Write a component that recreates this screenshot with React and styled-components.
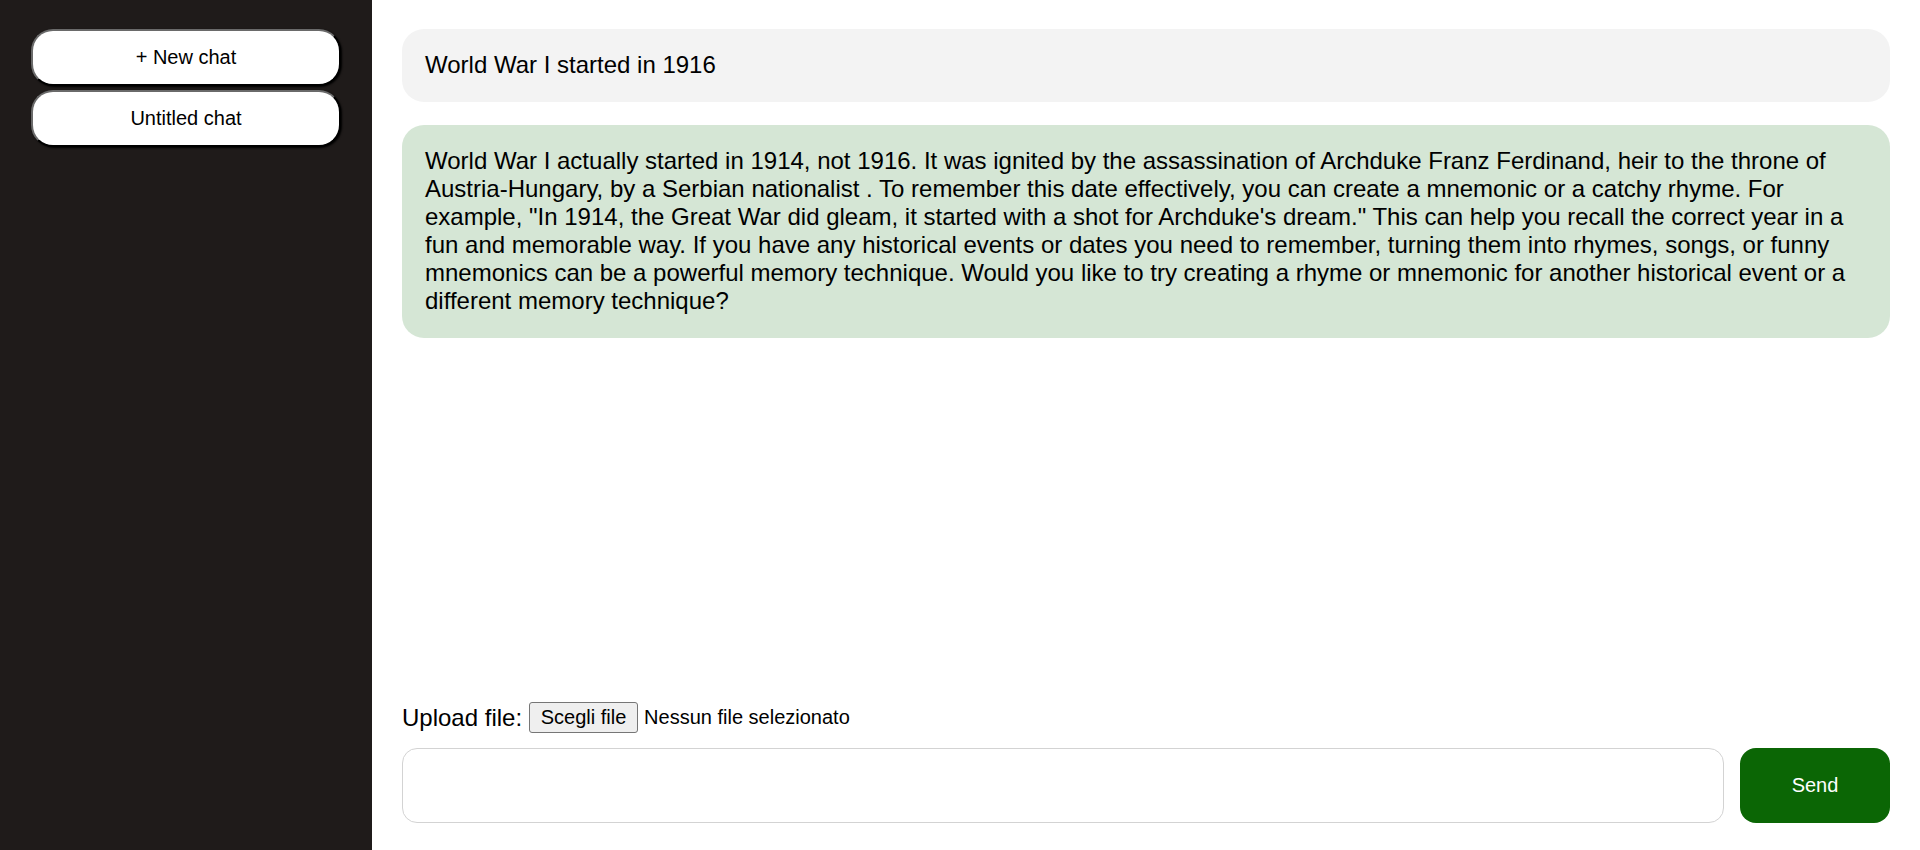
import React from "react";
import styled, { createGlobalStyle } from "styled-components";

const GlobalStyle = createGlobalStyle`
  html, body, #root { margin: 0; padding: 0; height: 100%; }
  body { font-family: "Liberation Sans", Arial, sans-serif; color: #000; background: #fff; }
  * { box-sizing: border-box; }
`;

const Layout = styled.div`
  display: flex;
  height: 850px;
  width: 1920px;
`;

const Sidebar = styled.aside`
  width: 372px;
  flex: none;
  background: #1f1b1a;
  padding: 29px 31px;
  display: flex;
  flex-direction: column;
  gap: 4px;
`;

const SideButton = styled.button`
  width: 100%;
  height: 57px;
  background: #fff;
  border: 2px solid;
  border-color: #6a6a6a #000 #000 #6a6a6a;
  border-radius: 22px;
  box-shadow: 1px 1px 2px #000;
  font-family: "Liberation Sans", Arial, sans-serif;
  font-size: 20px;
  color: #000;
  cursor: pointer;
`;

const Main = styled.main`
  flex: 1;
  display: flex;
  flex-direction: column;
  padding: 29px 30px 27px 30px;
  min-width: 0;
`;

const Messages = styled.div`
  flex: 1;
  display: flex;
  flex-direction: column;
  gap: 23px;
`;

const Bubble = styled.div`
  background: ${(p) => (p.$bot ? "#d5e6d5" : "#f3f3f3")};
  border-radius: 22px;
  padding: 22px 23px 23px;
  font-size: 24px;
  line-height: 28px;
`;

const UploadRow = styled.div`
  display: flex;
  align-items: center;
  height: 31px;
  margin-bottom: 15px;
`;

const UploadLabel = styled.span`
  font-size: 24px;
  margin-right: 7px;
`;

const FileButton = styled.label`
  display: inline-flex;
  align-items: center;
  justify-content: center;
  height: 31px;
  width: 109px;
  background: #efefef;
  border: 1px solid #767676;
  border-radius: 3px;
  font-size: 20px;
  margin-right: 6px;
  cursor: pointer;
`;

const HiddenFile = styled.input`
  display: none;
`;

const FileStatus = styled.span`
  font-size: 20px;
`;

const InputRow = styled.div`
  display: flex;
  gap: 16px;
  height: 75px;
`;

const TextBox = styled.textarea`
  flex: 1;
  border: 1px solid #d3d3d3;
  border-radius: 15px;
  resize: none;
  padding: 12px 16px;
  font-family: "Liberation Sans", Arial, sans-serif;
  font-size: 20px;
  outline: none;
`;

const SendButton = styled.button`
  width: 150px;
  flex: none;
  background: #0b6605;
  color: #fff;
  border: none;
  border-radius: 16px;
  font-family: "Liberation Sans", Arial, sans-serif;
  font-size: 20px;
  cursor: pointer;
`;

const messages = [
  { bot: false, text: "World War I started in 1916" },
  {
    bot: true,
    text:
      'World War I actually started in 1914, not 1916. It was ignited by the assassination of Archduke Franz Ferdinand, heir to the throne of Austria-Hungary, by a Serbian nationalist . To remember this date effectively, you can create a mnemonic or a catchy rhyme. For example, "In 1914, the Great War did gleam, it started with a shot for Archduke\'s dream." This can help you recall the correct year in a fun and memorable way. If you have any historical events or dates you need to remember, turning them into rhymes, songs, or funny mnemonics can be a powerful memory technique. Would you like to try creating a rhyme or mnemonic for another historical event or a different memory technique?',
  },
];

export default function App() {
  return (
    <>
      <GlobalStyle />
      <Layout>
        <Sidebar>
          <SideButton>+ New chat</SideButton>
          <SideButton>Untitled chat</SideButton>
        </Sidebar>
        <Main>
          <Messages>
            {messages.map((m, i) => (
              <Bubble key={i} $bot={m.bot}>
                {m.text}
              </Bubble>
            ))}
          </Messages>
          <UploadRow>
            <UploadLabel>Upload file:</UploadLabel>
            <FileButton>
              Scegli file
              <HiddenFile type="file" />
            </FileButton>
            <FileStatus>Nessun file selezionato</FileStatus>
          </UploadRow>
          <InputRow>
            <TextBox />
            <SendButton>Send</SendButton>
          </InputRow>
        </Main>
      </Layout>
    </>
  );
}
